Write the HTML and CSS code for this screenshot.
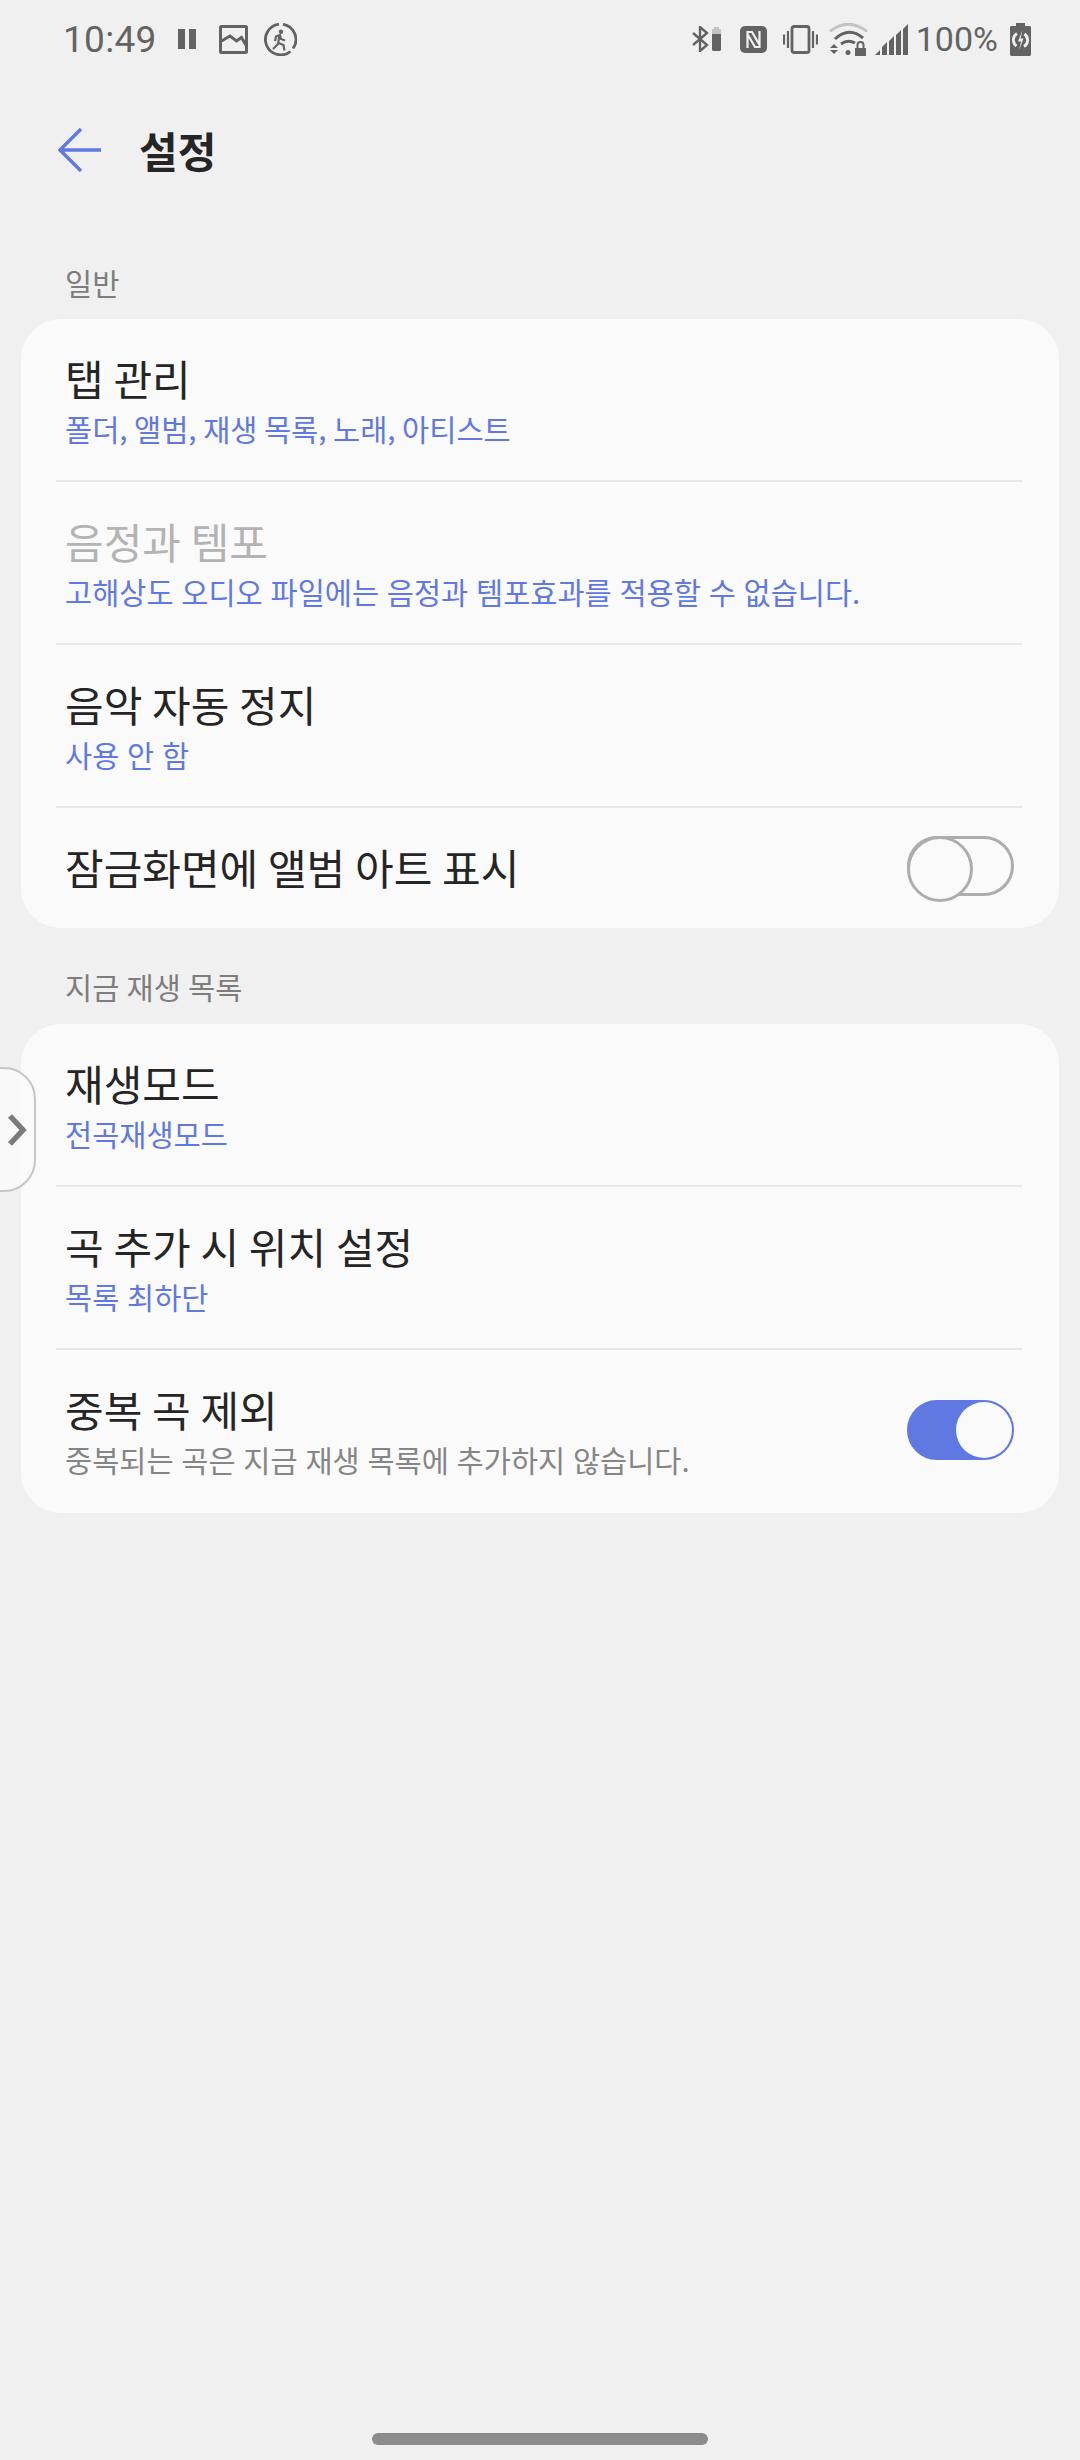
FILE: index.html
```html
<!DOCTYPE html>
<html lang="ko">
<head>
<meta charset="utf-8">
<title>설정</title>
<link rel="stylesheet" href="styles.css">
</head>
<body>
<div class="screen">
  <header class="status">
    <div class="status-left">
      <span class="clock">10:49</span>
      <svg class="ic-pause" width="20" height="20" viewBox="0 0 20 20"><path d="M1 0h7v20H1zM12 0h7v20h-7z" fill="#636363"/></svg>
      <svg class="ic-pic" width="29" height="29" viewBox="0 0 29 29"><rect x="1.500" y="1.500" width="26" height="26" rx="1" fill="none" stroke="#636363" stroke-width="3"/><path d="M2.500 16l8.500-5 6.500 5 5-3.500 5 8.500" fill="none" stroke="#636363" stroke-width="3"/></svg>
      <svg class="ic-run" width="33" height="33" viewBox="0 0 33 33"><path d="M19 1.300A15.400 15.400 0 0 1 29 25.500M26.500 28.500A15.400 15.400 0 1 1 15 1.200" fill="none" stroke="#636363" stroke-width="2.800"/><circle cx="17" cy="8.700" r="2.200" fill="#636363"/><path d="M11 18l1-4.500 4-1.500 1 4 4 1.500M15.500 12l-1.500 9-5 5M14.500 20l5 2 1 5.500" fill="none" stroke="#636363" stroke-width="2.200"/></svg>
    </div>
    <div class="status-right">
      <svg class="ic-bt" width="29" height="26" viewBox="0 0 29 26"><path d="M1 7l14 12-7 6V1l7 6L1 19" fill="none" stroke="#636363" stroke-width="2.400"/><path d="M20 8V3h2V1h5v2h2v5z" fill="#c4c4c4"/><path d="M20 8h9v16l-1 1h-7l-1-1z" fill="#636363"/></svg>
      <svg class="ic-nfc" width="27" height="27" viewBox="0 0 27 27"><rect width="27" height="27" rx="5" fill="#636363"/><path d="M7.500 22V6h4.500l7 12M19.500 5v16H15L8 9" fill="none" stroke="#f0f0f0" stroke-width="2.200"/></svg>
      <svg class="ic-vib" width="35" height="29" viewBox="0 0 35 29"><rect x="9" y="1.500" width="17" height="26" rx="2" fill="none" stroke="#636363" stroke-width="2.800"/><path d="M1 9.500v10M5 6v17M30 6v17M34 9.500v10" stroke="#636363" stroke-width="2.200" fill="none"/></svg>
      <svg class="ic-wifi" width="39" height="33" viewBox="0 0 39 33"><path d="M1 8.500Q19-6 38 8.500" fill="none" stroke="#c4c4c4" stroke-width="2.800"/><path d="M6 16Q20 3 34 15M12 21q7-5 14-1" fill="none" stroke="#636363" stroke-width="3"/><path d="M1 25h8l-4-4zM1 27h8l-4 4z" fill="#636363"/><circle cx="19" cy="29.500" r="2.500" fill="#636363"/><path d="M26 25h11v8H26z" fill="#636363"/><path d="M28.500 25v-3a3 3 0 0 1 6 0v3" fill="none" stroke="#636363" stroke-width="2"/></svg>
      <svg class="ic-sig" width="33" height="31" viewBox="0 0 33 31"><path d="M0 31l5-5v5zM7 31v-8l5-5v13zM14 31V17l5-5v19zM21 31V11l5-5v25zM28 31V5l5-5v31z" fill="#636363"/></svg>
      <span class="pct">100%</span>
      <svg class="ic-batt" width="21" height="33" viewBox="0 0 21 33"><path d="M6 0h9v3h5l1 1v28l-1 1H1l-1-1V4l1-1h5z" fill="#636363"/><path d="M7 10.500A7.500 7.500 0 0 0 6.500 23M14 23.500A7.500 7.500 0 0 0 14.500 11" fill="none" stroke="#f0f0f0" stroke-width="2.800"/><path d="M12.500 7L8 18.500h3L9 27l4.500-11.500h-3z" fill="#f0f0f0"/></svg>
    </div>
  </header>

  <div class="appbar">
    <svg class="back" width="44" height="46" viewBox="0 0 44 46"><path d="M43 23H3M23 2L2 23l21 21" fill="none" stroke="#5f78e2" stroke-width="3.400"/></svg>
    <h1 class="title">설정</h1>
  </div>

  <p class="section section-first">일반</p>
  <section class="card">
    <div class="row"><div class="row-text"><div class="name">탭 관리</div><div class="sub sub-list">폴더, 앨범, 재생 목록, 노래, 아티스트</div></div></div>
    <div class="row"><div class="row-text"><div class="name name-off">음정과 템포</div><div class="sub">고해상도 오디오 파일에는 음정과 템포효과를 적용할 수 없습니다.</div></div></div>
    <div class="row"><div class="row-text"><div class="name">음악 자동 정지</div><div class="sub">사용 안 함</div></div></div>
    <div class="row row-last row-short"><div class="row-text row-text-single"><div class="name">잠금화면에 앨범 아트 표시</div></div><span class="switch"></span></div>
  </section>

  <p class="section">지금 재생 목록</p>
  <section class="card">
    <div class="row"><div class="row-text"><div class="name">재생모드</div><div class="sub">전곡재생모드</div></div></div>
    <div class="row"><div class="row-text"><div class="name">곡 추가 시 위치 설정</div><div class="sub">목록 최하단</div></div></div>
    <div class="row row-last"><div class="row-text"><div class="name">중복 곡 제외</div><div class="sub sub-grey">중복되는 곡은 지금 재생 목록에 추가하지 않습니다.</div></div><span class="switch switch-on"></span></div>
  </section>

  <div class="edge-handle"><svg width="20" height="32" viewBox="0 0 20 32"><path d="M3 2l13 14L3 30" fill="none" stroke="#7b7b7b" stroke-width="5.500"/></svg></div>
  <div class="home-bar"></div>
</div>
</body>
</html>
```
FILE: styles.css
```css
* { box-sizing: border-box; }
html, body { margin: 0; padding: 0; }
body { background: #f0f0f0; font-family: "Noto Sans CJK KR", "Roboto", sans-serif; }
.screen { position: relative; width: 1080px; height: 2460px; background: #f0f0f0; overflow: hidden; }

.status { height: 78px; padding: 0 49px 0 63px; display: flex; align-items: center; justify-content: space-between; color: #636363; font-family: "Roboto", sans-serif; }
.status-left, .status-right { display: flex; align-items: center; }
.clock { font-size: 37px; margin-right: 20px; letter-spacing: 0.3px; }
.pct { font-size: 34px; margin: 0 12px 0 8px; }
.ic-pause { margin-right: 22px; }
.ic-pic { margin-right: 16px; }
.ic-bt { margin-right: 19px; }
.ic-nfc { margin-right: 16px; }
.ic-vib { margin-right: 11px; }
.ic-wifi { margin-right: 7px; }

.appbar { height: 144px; padding-left: 58px; display: flex; align-items: center; }
.back { margin-right: 37px; }
.title { margin: 0; font-size: 42px; font-weight: 700; line-height: 60px; color: #252525; }

.section { margin: 0 0 6px; height: 62px; padding-left: 65px; font-size: 29.500px; line-height: 60px; word-spacing: -1px; color: #7d7d7d; }
.section-first { margin-top: 29px; line-height: 62px; }
.card { margin: 0 21px 28px; background: #fafafa; border-radius: 40px; padding: 0 37px 0 35px; }

.row { height: 163px; padding: 0 8px 0 9px; display: flex; align-items: center; justify-content: space-between; border-bottom: 2px solid #e8e8e8; }
.row-last { border-bottom: 0; padding-bottom: 2px; }
.row-short { height: 120px; }
.row-text { padding-top: 1px; }
.row-text-single { padding: 0 0 2px; }
.name { font-size: 42px; line-height: 57px; word-spacing: -2px; color: #252525; }
.name-off { color: #b3b3b3; }
.sub { font-size: 29.500px; line-height: 45px; word-spacing: -0.5px; color: #5f78e2; }
.sub-list { word-spacing: -1.700px; }
.sub-grey { color: #858585; }

.switch { position: relative; display: block; flex: none; width: 107px; height: 60px; margin-bottom: 2px; border: 3px solid #adadad; border-radius: 30px; }
.switch::before { content: ""; position: absolute; left: -3px; top: -3px; width: 60px; height: 60px; border: 3px solid #adadad; border-radius: 50%; background: #fafafa; }
.switch-on { background: #5f78e2; border-color: #5f78e2; }
.switch-on::before { left: auto; right: -1px; top: -1px; width: 56px; height: 56px; border: 0; }

.edge-handle { position: absolute; left: -2px; top: 1067px; width: 38px; height: 125px; padding-left: 7px; display: flex; align-items: center; background: rgba(250,250,250,.9); border: 2px solid #c6c6c6; border-radius: 0 32px 32px 0; }
.home-bar { position: absolute; left: 372px; top: 2433px; width: 336px; height: 12px; border-radius: 6px; background: #8c8c8c; }
```
